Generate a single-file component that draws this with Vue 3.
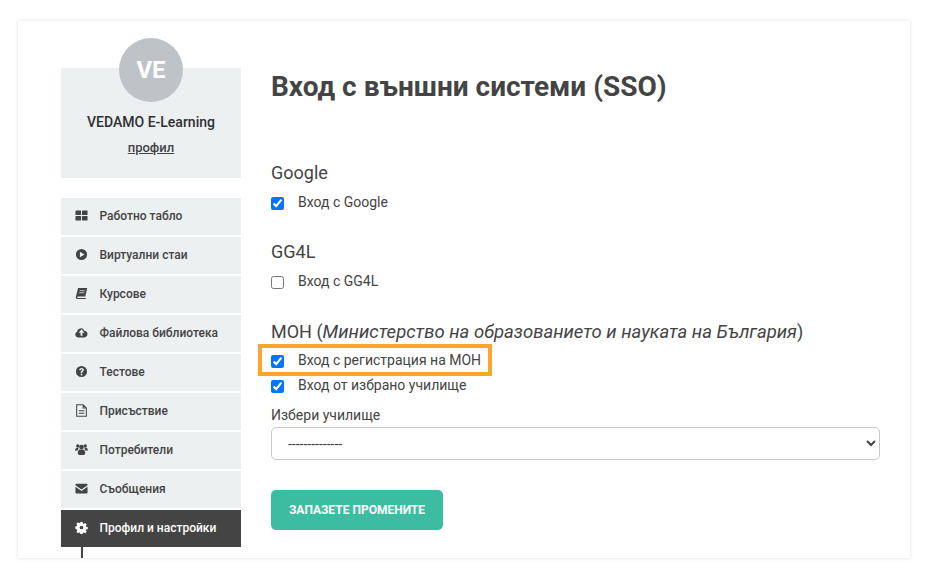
<script setup>
const items = [
  { label: 'Работно табло', icon: 'grid' },
  { label: 'Виртуални стаи', icon: 'play' },
  { label: 'Курсове', icon: 'book' },
  { label: 'Файлова библиотека', icon: 'cloud' },
  { label: 'Тестове', icon: 'help' },
  { label: 'Присъствие', icon: 'file' },
  { label: 'Потребители', icon: 'users' },
  { label: 'Съобщения', icon: 'mail' },
  { label: 'Профил и настройки', icon: 'gear', active: true }
]
</script>

<template>
  <div class="page">
    <div class="card">
      <aside class="sidebar">
        <div class="profile">
          <div class="avatar">VE</div>
          <div class="name">VEDAMO E-Learning</div>
          <a class="profile-link" href="#">профил</a>
        </div>
        <nav class="menu">
          <a v-for="item in items" :key="item.label" href="#" class="menu-item" :class="{ active: item.active }">
            <svg class="icon" viewBox="0 0 14 14" fill="currentColor">
              <template v-if="item.icon === 'grid'">
                <rect x="0.500" y="1.500" width="6" height="5" rx=".6" /><rect x="7.500" y="1.500" width="6" height="5" rx=".6" />
                <rect x="0.500" y="7.500" width="6" height="5" rx=".6" /><rect x="7.500" y="7.500" width="6" height="5" rx=".6" />
              </template>
              <path v-else-if="item.icon === 'play'" fill-rule="evenodd" d="M7 1a6 6 0 1 0 0 12A6 6 0 0 0 7 1zM5.300 4.100 10.300 7l-5 2.900z" />
              <template v-else-if="item.icon === 'book'">
                <path d="M3.300 1.200H13.200L11.100 10.300H3.300C2.700 10.300 2.300 10.700 2.300 11.100S2.700 11.800 3.300 11.800H11.800L11.500 12.900H2.500C1.300 12.900 .6 12 .9 10.900z" />
                <path d="M5 4h5.500M4.500 6.200h5.500" stroke="#ecf0f1" stroke-width=".8" />
              </template>
              <path v-else-if="item.icon === 'cloud'" fill-rule="evenodd" d="M3.300 12.300A3.100 3.100 0 0 1 2.300 6.300 4 4 0 0 1 10 5 3.700 3.700 0 0 1 10.600 12.300zM7 3.600 3.900 7.400H6V10.400H8V7.400H10.100z" />
              <path v-else-if="item.icon === 'help'" fill-rule="evenodd" d="M7 1a6 6 0 1 0 0 12A6 6 0 0 0 7 1zM6.100 9.500H7.900V11.100H6.100zM4.500 5.400C4.600 3.900 5.700 3.100 7.100 3.100 8.500 3.100 9.600 4 9.600 5.200 9.600 6.100 9.100 6.500 8.400 7 8 7.300 7.900 7.500 7.900 8.600H6.100C6.100 7.100 6.500 6.700 7.100 6.200 7.500 5.900 7.800 5.700 7.800 5.300 7.800 4.900 7.500 4.700 7.100 4.700 6.600 4.700 6.300 5 6.200 5.600z" />
              <g v-else-if="item.icon === 'file'" fill="none" stroke="currentColor" stroke-width="1.100">
                <path d="M1.800 .9H8.800L12.200 4.300V13.100H1.800zM8.800 .9V4.300H12.200" />
                <path d="M4 7.200h6M4 9.900h6" />
              </g>
              <template v-else-if="item.icon === 'users'">
                <circle cx="3" cy="3.200" r="1.800" /><circle cx="11" cy="3.200" r="1.800" /><circle cx="7" cy="4.400" r="2.500" />
                <path d="M0 8.200c0-2 1-3.200 2.500-3.200.6 0 1 .2 1.300.5-.5.900-.6 1.800-.4 2.700zM14 8.200c0-2-1-3.200-2.500-3.200-.6 0-1 .2-1.300.5.500.900.600 1.800.4 2.700z" />
                <path d="M3 10.800C3 8.500 4.300 7.100 5.500 7.100h3c1.200 0 2.500 1.400 2.500 3.700 0 1.300-.8 2-1.900 2H4.900c-1.100 0-1.900-.7-1.900-2z" />
              </template>
              <template v-else-if="item.icon === 'mail'">
                <path d="M.5 3.100C.5 2.300 1.100 1.800 1.800 1.800h10.400c.7 0 1.300.5 1.300 1.300v.5L7 8 .5 3.600z" />
                <path d="M.5 5.200 7 9.600l6.500-4.400v6c0 .7-.6 1.300-1.300 1.300H1.800c-.7 0-1.300-.6-1.300-1.300z" />
              </template>
              <path v-else fill-rule="evenodd" d="M5.800 1h2.400l.3 1.700 1 .4 1.400-1 1.700 1.700-1 1.400.4 1 1.700.3v2.400l-1.700.3-.4 1 1 1.400-1.700 1.700-1.400-1-1 .4-.3 1.700H5.800l-.3-1.700-1-.4-1.400 1-1.700-1.700 1-1.400-.4-1L.3 8.200V5.800L2 5.500l.4-1-1-1.400 1.700-1.700 1.400 1 1-.4zM7 5a2 2 0 1 0 0 4 2 2 0 0 0 0-4z" />
            </svg>
            <span>{{ item.label }}</span>
          </a>
        </nav>
        <div class="stem"></div>
      </aside>

      <main class="main">
        <h1 class="title">Вход с външни системи (SSO)</h1>

        <section class="group">
          <h2 class="group-title">Google</h2>
          <label class="check"><input type="checkbox" checked /><span>Вход с Google</span></label>
        </section>

        <section class="group">
          <h2 class="group-title">GG4L</h2>
          <label class="check"><input type="checkbox" /><span>Вход с GG4L</span></label>
        </section>

        <section class="group mon">
          <h2 class="group-title">МОН (<em>Министерство на образованието и науката на България</em>)</h2>
          <label class="check highlighted"><input type="checkbox" checked /><span>Вход с регистрация на МОН</span></label>
          <label class="check"><input type="checkbox" checked /><span>Вход от избрано училище</span></label>
        </section>

        <label class="field-label" for="school">Избери училище</label>
        <select id="school" class="select">
          <option>--------------</option>
        </select>

        <button class="save" type="button">ЗАПАЗЕТЕ ПРОМЕНИТЕ</button>
      </main>
    </div>
  </div>
</template>

<style>
html, body { margin: 0; background: #fff; }
</style>

<style scoped>
.page {
  width: 928px;
  height: 579px;
  box-sizing: border-box;
  padding: 21px 18px;
  font-family: Roboto, "Liberation Sans", sans-serif;
  color: #444;
  overflow: hidden;
}
.card {
  display: flex;
  height: 537px;
  background: #fff;
  box-shadow: 0 0 4px rgba(0, 0, 0, .13);
  overflow: hidden;
}
.sidebar {
  width: 180px;
  margin-left: 43px;
  padding-top: 47px;
  flex: none;
}
.profile {
  position: relative;
  height: 110px;
  box-sizing: border-box;
  padding-top: 46px;
  background: #ecf0f1;
  text-align: center;
}
.avatar {
  position: absolute;
  top: -30px;
  left: 58px;
  width: 64px;
  height: 64px;
  border-radius: 50%;
  background: #bdc3c7;
  color: #fff;
  font-size: 24px;
  font-weight: 700;
  line-height: 64px;
}
.name {
  font-size: 14px;
  font-weight: 500;
  line-height: 17px;
  color: #2f2f33;
}
.profile-link {
  display: block;
  margin-top: 9px;
  font-size: 13px;
  font-weight: 500;
  line-height: 15px;
  color: #444;
  text-decoration: underline;
}
.menu {
  display: flex;
  flex-direction: column;
  gap: 2px;
  margin-top: 20px;
}
.menu-item {
  display: flex;
  align-items: center;
  height: 37px;
  box-sizing: border-box;
  padding: 0 0 2px 14px;
  background: #ecf0f1;
  color: #444;
  font-size: 12px;
  font-weight: 500;
  text-decoration: none;
}
.menu-item.active {
  background: #444;
  color: #fff;
}
.icon {
  width: 13px;
  height: 13px;
  margin-right: 12px;
  flex: none;
}
.menu-item span { margin-left: -0.5px; }
.stem {
  width: 2px;
  height: 11px;
  margin-left: 20px;
  background: #444;
}
.main {
  flex: 1;
  margin-left: 30px;
  margin-right: 30px;
  min-width: 0;
}
.title {
  margin: 47px 0 0;
  font-size: 28px;
  font-weight: 700;
  line-height: 38px;
  color: #444;
}
.group-title {
  margin: 0;
  font-size: 18px;
  font-weight: 400;
  line-height: 22px;
  color: #444;
}
.group-title em { font-size: 18.5px; }
.group:nth-of-type(1) { margin-top: 56px; }
.group:nth-of-type(2) { margin-top: 25px; }
.group:nth-of-type(3) { margin-top: 26px; }
.check {
  display: flex;
  align-items: center;
  height: 25px;
  font-size: 14px;
  color: #444;
}
.group-title + .check { margin-top: 7px; }
.mon .group-title + .check { margin-top: 6px; }
.check input {
  width: 13px;
  height: 13px;
  margin: 0 14px 0 0;
  flex: none;
}
.check span { position: relative; top: -2px; }
.highlighted { position: relative; }
.highlighted::after {
  content: "";
  position: absolute;
  left: -13px;
  top: -5px;
  width: 234px;
  height: 32px;
  box-sizing: border-box;
  border: 4px solid #fda52d;
  pointer-events: none;
}
.field-label {
  display: block;
  margin-top: 8px;
  font-size: 14px;
  line-height: 17px;
  color: #444;
}
.select {
  display: block;
  width: 609px;
  height: 33px;
  margin-top: 3px;
  padding: 0 12px;
  background: #fff;
  border: 1px solid #c8c8c8;
  border-radius: 5px;
  font-family: inherit;
  font-size: 14px;
  color: #444;
}
.save {
  display: block;
  width: 172px;
  height: 40px;
  margin-top: 30px;
  border: 0;
  border-radius: 5px;
  background: #3cbca0;
  color: #fff;
  font-family: inherit;
  font-size: 12px;
  font-weight: 700;
}
</style>
